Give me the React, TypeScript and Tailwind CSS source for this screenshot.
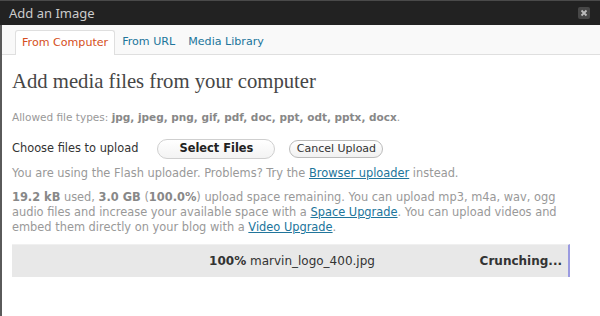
import React from "react";

const sans = { fontFamily: '"DejaVu Sans", Verdana, sans-serif' };

export default function App() {
  return (
    <div className="w-[600px] h-[316px] bg-white overflow-hidden flex flex-col" style={sans}>
      <div className="h-[25px] bg-[#222222] border-t border-[#4a4a4a] flex items-center justify-between pl-[9px] pr-[10px] shrink-0">
        <span className="text-[13px] text-[#cccccc] leading-none" style={{ fontFamily: '"Noto Sans", sans-serif' }}>Add an Image</span>
        <div className="w-[12px] h-[12px] rounded-[2px] bg-[#474747] flex items-center justify-center">
          <svg width="8" height="8" viewBox="0 0 8 8">
            <path d="M1.5 1.5 L6.5 6.5 M6.5 1.5 L1.5 6.5" stroke="#bdbdbd" strokeWidth="1.8" />
          </svg>
        </div>
      </div>
      <div className="flex-1 flex border-l-2 border-[#5a5a5a]">
        <div className="flex-1 flex flex-col">
          <div className="h-[30px] bg-[#f9f9f9] border-b border-[#dfdfdf] flex items-end pl-[13px] shrink-0">
            <div className="h-[25px] pt-px px-[6px] bg-white border border-[#dfdfdf] border-b-0 rounded-t-[3px] -mb-px flex items-center text-[11.1px] text-[#d54e21]">
              From Computer
            </div>
            <div className="h-[25px] pt-px pl-[7px] pr-[6px] flex items-center text-[11.1px] text-[#21759b]">From URL</div>
            <div className="h-[25px] pt-px pl-[7px] pr-[6px] flex items-center text-[11.1px] text-[#21759b]">Media Library</div>
          </div>
          <div className="px-[10px] pt-[14px]">
            <h1 className="text-[20.7px] leading-[24px] text-[#464646]" style={{ fontFamily: '"Liberation Serif", Georgia, serif' }}>
              Add media files from your computer
            </h1>
            <p className="mt-[17px] text-[10.5px] leading-[15px] text-[#999999]">
              Allowed file types: <b className="text-[#888888]">jpg, jpeg, png, gif, pdf, doc, ppt, odt, pptx, docx</b>.
            </p>
            <div className="mt-[14px] flex items-center">
              <span className="text-[11.4px] text-[#333333]">Choose files to upload</span>
              <div className="ml-[19px] w-[118px] h-[20px] rounded-full border border-[#cfcfcf] bg-gradient-to-b from-white to-[#f3f3f3] flex items-center justify-center text-[11.4px] font-bold text-[#222222]">
                Select Files
              </div>
              <div className="ml-[14px] w-[94px] h-[18px] rounded-full border border-[#bbbbbb] bg-gradient-to-b from-white to-[#f1f1f1] flex items-center justify-center text-[11px] text-[#333333]">
                Cancel Upload
              </div>
            </div>
            <p className="mt-[6px] text-[11.4px] leading-[16px] text-[#999999]">
              You are using the Flash uploader. Problems? Try the <span className="text-[#21759b] underline">Browser uploader</span> instead.
            </p>
            <p className="mt-[9px] text-[11.4px] leading-[15px] text-[#999999] w-[552px]">
              <b className="text-[#888888]">19.2 kB</b> used, <b className="text-[#888888]">3.0 GB</b> (<b className="text-[#888888]">100.0%</b>) upload space remaining. You can upload mp3, m4a, wav, ogg audio files and increase your available space with a <span className="text-[#21759b] underline">Space Upgrade</span>. You can upload videos and embed them directly on your blog with a <span className="text-[#21759b] underline">Video Upgrade</span>.
            </p>
            <div className="mt-[9px] w-[558px] h-[33px] bg-[#e8e8e8] border-t border-[#f0f0f0] border-r-2 border-r-[#9a9ae0] relative flex items-center">
              <div className="flex-1 text-center text-[12px] text-[#333333] pl-[4px]">
                <b>100%</b> marvin_logo_400.jpg
              </div>
              <div className="absolute right-[6px] text-[12px] font-bold text-[#333333]">Crunching...</div>
            </div>
          </div>
        </div>
      </div>
    </div>
  );
}
